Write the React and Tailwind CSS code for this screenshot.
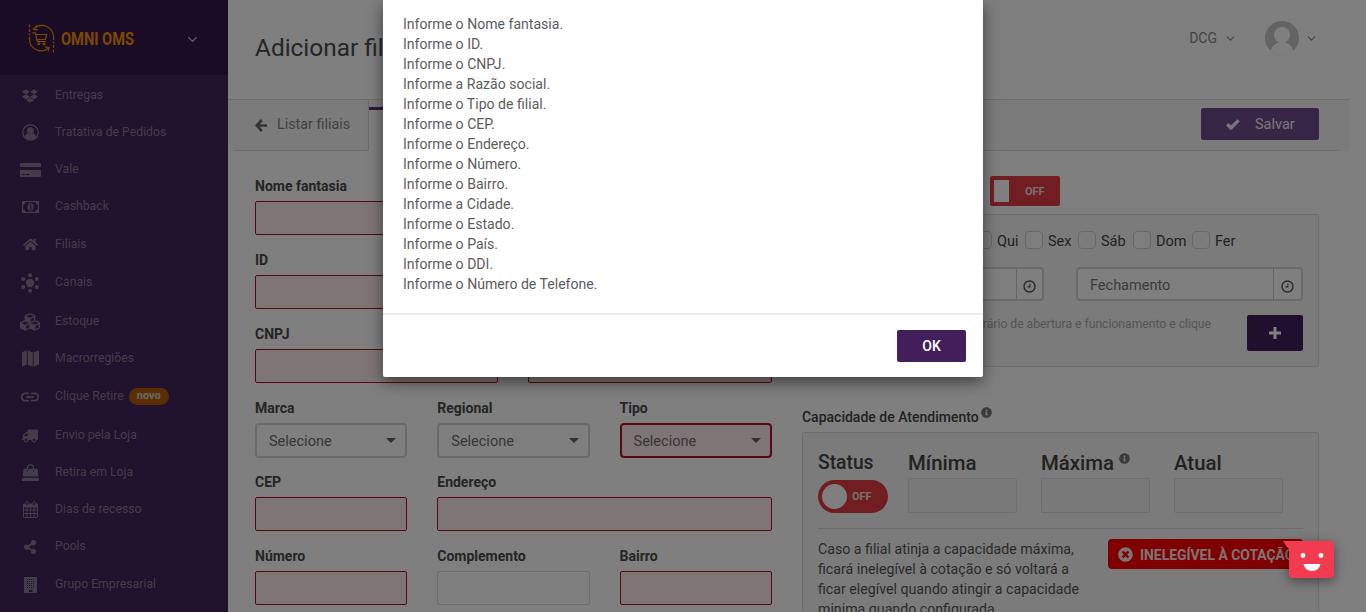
import React from "react";
import { FaDropbox, FaHome, FaCubes, FaTruck, FaShareAlt, FaInfoCircle, FaTimesCircle } from "react-icons/fa";
import { MdLink } from "react-icons/md";
import { FiChevronDown } from "react-icons/fi";

const UserIcon = () => (
  <svg width="17" height="17" viewBox="0 0 17 17" fill="currentColor">
    <circle cx="8.5" cy="8.5" r="7.7" fill="none" stroke="currentColor" strokeWidth="1.3" />
    <circle cx="8.5" cy="6.6" r="3.4" />
    <path d="M3 13.2c.4-2.6 1.7-3.8 3.2-4 1.400 1 3.200 1 4.600 0 1.500.2 2.800 1.400 3.200 4-1.300 1.600-3.300 2.500-5.500 2.500S4.300 14.800 3 13.200z" />
  </svg>
);
const CardIcon = () => (
  <svg width="21" height="14" viewBox="0 0 21 14" fill="currentColor">
    <path d="M1.200 0h18.600q1.200 0 1.200 1.200V4H0V1.200Q0 0 1.200 0z" />
    <path fillRule="evenodd" d="M0 7h21v5.800q0 1.200-1.200 1.200H1.200Q0 14 0 12.800zM2 11v1h3v-1zM6 11v1h3.500v-1z" />
  </svg>
);
const MoneyIcon = () => (
  <svg width="17" height="12" viewBox="0 0 17 12" fill="currentColor">
    <path fillRule="evenodd" d="M0 0h17v12H0zM3.400 1.200A2.300 2.300 0 0 1 1.200 3.400v5.200a2.300 2.300 0 0 1 2.200 2.200h10.200a2.300 2.300 0 0 1 2.200-2.200V3.400a2.300 2.300 0 0 1-2.200-2.200z" />
    <ellipse cx="8.500" cy="6" rx="3" ry="3.700" />
    <path d="M7.500 4.200 8.800 3.500v4.300M7.300 8.200h2.600" fill="none" stroke="#42245a" strokeWidth="1" />
  </svg>
);
const HubIcon = () => (
  <svg width="18" height="20" viewBox="0 0 18 20" fill="currentColor">
    <circle cx="9" cy="10" r="4.200" />
    <circle cx="9" cy="2.200" r="2" /><circle cx="9" cy="17.800" r="2" />
    <circle cx="2.200" cy="6" r="2" /><circle cx="15.800" cy="6" r="2" />
    <circle cx="2.200" cy="14" r="2" /><circle cx="15.800" cy="14" r="2" />
  </svg>
);
const MapIcon = () => (
  <svg width="17" height="17" viewBox="0 0 17 17" fill="currentColor">
    <path d="M0 2.200 4.800.2v14.400L0 16.800zM5.700.2l5 2v14.600l-5-2.200zM11.600 2.200 17 .2v14.400l-5.400 2.200z" />
  </svg>
);
const BagIcon = () => (
  <svg width="17" height="17" viewBox="0 0 17 17" fill="currentColor">
    <path d="M1.600 4.700h13.800l1 7.800H.6zM.3 13.700h16.400L17 17H0z" />
    <path d="M5.400 7V4a3.100 3.100 0 0 1 6.200 0v3" fill="none" stroke="currentColor" strokeWidth="1.200" />
    <circle cx="5.400" cy="6.700" r=".7" fill="#42245a" /><circle cx="11.600" cy="6.700" r=".7" fill="#42245a" />
  </svg>
);
const CalendarIcon = () => (
  <svg width="15" height="17" viewBox="0 0 15 17" fill="currentColor">
    <path fillRule="evenodd" d="M1 2.500h13q1 0 1 1V16q0 1-1 1H1q-1 0-1-1V3.500q0-1 1-1zM1 6.600v2h2.500v-2zM4.400 6.600v2h2.700v-2zM8 6.600v2h2.700v-2zM11.600 6.600v2H14v-2zM1 9.500V12h2.500V9.500zM4.400 9.500V12h2.700V9.500zM8 9.500V12h2.700V9.500zM11.600 9.500V12H14V9.500zM1 12.900v3h2.500v-3zM4.400 12.900v3h2.700v-3zM8 12.900v3h2.700v-3zM11.600 12.900v3H14v-3z" />
    <rect x="2.800" y=".5" width="2.400" height="4" rx="1.200" fill="#42245a" stroke="currentColor" strokeWidth="1" />
    <rect x="9.800" y=".5" width="2.400" height="4" rx="1.200" fill="#42245a" stroke="currentColor" strokeWidth="1" />
  </svg>
);
const BuildingIcon = () => (
  <svg width="13" height="16" viewBox="0 0 13 16" fill="currentColor">
    <rect width="13" height="16" rx=".5" />
    <g stroke="#42245a" strokeWidth="1" strokeDasharray="1 1">
      <path d="M3 2.500h8M3 4.500h8M3 6.500h8M3 8.500h8M3 10.500h8" />
    </g>
    <path d="M5 12.800h3.500V15H5z" fill="#42245a" />
  </svg>
);
const ArrowIcon = () => (
  <svg width="12" height="13" viewBox="0 0 12 13" className="mr-[10px]" fill="none" stroke="#666" strokeWidth="2.600">
    <path d="M6.800 1 1.700 6.500l5.100 5.500M2 6.500h10" />
  </svg>
);
const CheckIcon = () => (
  <svg width="14" height="11" viewBox="0 0 14 11" className="mr-[15px]" fill="none" stroke="currentColor" strokeWidth="3.400">
    <path d="M1.200 5.200 5 8.800l7.600-7.400" />
  </svg>
);

const menu = [
  ["Entregas", <FaDropbox size={16} />, "h-[37px]"],
  ["Tratativa de Pedidos", <UserIcon />, "h-[37px]"],
  ["Vale", <CardIcon />, "h-[37px]"],
  ["Cashback", <MoneyIcon />, "h-[38px]"],
  ["Filiais", <FaHome size={15} />, "h-[38px]"],
  ["Canais", <HubIcon />, "h-[39px]"],
  ["Estoque", <FaCubes size={20} />, "h-[37px]"],
  ["Macrorregiões", <MapIcon />, "h-[38px]"],
  ["Clique Retire", <MdLink size={22} />, "h-[39px]"],
  ["Envio pela Loja", <FaTruck size={16} className="-scale-x-100" />, "h-[37px]"],
  ["Retira em Loja", <BagIcon />, "h-[37px]"],
  ["Dias de recesso", <CalendarIcon />, "h-[37px]"],
  ["Pools", <FaShareAlt size={14} />, "h-[38px]"],
  ["Grupo Empresarial", <BuildingIcon />, "h-[37px]"],
];

function Sidebar() {
  return (
    <aside className="w-[228px] shrink-0 overflow-hidden bg-[#42245a]">
      <div className="flex h-[75px] items-center bg-[#36184a] pl-7 pt-0.5">
        <svg width="27" height="29" viewBox="0 0 27 29" fill="none" stroke="#f29400" strokeWidth="1.200">
          <path d="M1.500.5v11" strokeDasharray="3 1.500" />
          <path d="M1.500 13v2.500A11.500 11.500 0 0 0 20.500 24M17 22.800l4 .6-1 4" />
          <path d="M25.500 28.500v-11" strokeDasharray="3 1.500" />
          <path d="M25.500 16v-2.500A11.500 11.500 0 0 0 6 4.800M9 1.500 5.500 5.200l4.300.6" />
          <path d="M4.500 8.800h2.700l2.300 8.700h8M7.500 10.500h11.200l-1.400 5H9" />
          <circle cx="10.800" cy="19.800" r=".9" /><circle cx="16" cy="19.800" r=".9" />
        </svg>
        <svg width="76" height="24" viewBox="0 0 76 24" className="ml-1.5">
          <text x="0" y="18" textLength="73" lengthAdjust="spacingAndGlyphs" fill="#f29400" fontFamily="Roboto, sans-serif" fontWeight="700" fontSize="18">OMNI OMS</text>
        </svg>
        <FiChevronDown size={15} strokeWidth={2.200} className="ml-[48px] mt-0.5 text-[#c4bcca]" />
      </div>
      <nav className="pt-0.5 text-[#8a7895]">
        {menu.map(([label, icon, h]) => (
          <div key={label} className={h}>
            <div className="flex h-[37px] items-center">
              <span className="ml-[18px] flex w-6 shrink-0 justify-center">{icon}</span>
              <span className="ml-[13px] whitespace-nowrap text-[12.250px]">{label}</span>
              {label === "Clique Retire" && (
                <span className="ml-[5px] flex h-[17px] w-10 items-center justify-center rounded-full bg-[#b45f09] text-[11px] font-bold text-[#d8d0c8]">novo</span>
              )}
            </div>
          </div>
        ))}
      </nav>
    </aside>
  );
}

function Field({ label, tone = "error", span, select }) {
  const box = tone === "error" ? "border-[#b01028] bg-[#ffeaec]" : "border-[#dcdcdc] bg-white";
  return (
    <div className={span}>
      <div className="mb-[5px] h-5 whitespace-nowrap text-sm leading-5 font-bold text-[#4a4a4a]">{label}</div>
      {select ? (
        <div className={"flex h-[35px] items-center justify-between rounded-[4px] border-2 pr-[9px] pl-3 text-[14.500px] text-[#6e6e6e] " + (tone === "error" ? "border-[#b01028] bg-[#ffeaec]" : "border-[#d4d4d4] bg-white")}>
          <span className="pt-0.5">Selecione</span>
          <span className="border-x-[5px] border-t-[5px] border-x-transparent border-t-[#606060]" />
        </div>
      ) : (
        <div className={"h-[34px] rounded-[2px] border " + box} />
      )}
    </div>
  );
}

const Clock = () => (
  <svg width="13" height="13" viewBox="0 0 13 13" fill="none" stroke="#555" strokeWidth="1.400">
    <circle cx="6.500" cy="6.500" r="5.500" /><path d="M6.900 3.500v3.400H4.500" strokeWidth="1.100" />
  </svg>
);

function TimeInput({ label, addon }) {
  return (
    <div className="flex h-[34px] w-[227px] rounded-[4px] border-2 border-[#d4d4d4] bg-white">
      <div className="flex flex-1 items-center pt-[3px] pl-3 text-[14.500px] text-[#777]">{label}</div>
      <div className={"flex items-center justify-center border-l border-[#c8c8c8] pt-1 " + addon}><Clock /></div>
    </div>
  );
}

function Capacity({ label, info }) {
  return (
    <div className="w-[109px]">
      <div className="flex h-[30px] items-center text-[20.400px] font-medium text-[#444]">
        {label}{info && <FaInfoCircle size={11} className="mb-2.5 ml-[5px] text-[#777]" />}
      </div>
      <div className="h-[35px] rounded-[2px] border border-[#dedede] bg-[#f2f2f2]" />
    </div>
  );
}

const days = [["Seg", "w-[49px]"], ["Ter", "w-[49px]"], ["Qua", "w-[52px]"], ["Qui", "w-[51px]"], ["Sex", "w-[53px]"], ["Sáb", "w-[55px]"], ["Dom", "w-[59px]"], ["Fer", "w-[50px]"]];

const messages = ["o Nome fantasia", "o ID", "o CNPJ", "a Razão social", "o Tipo de filial", "o CEP", "o Endereço", "o Número", "o Bairro", "a Cidade", "o Estado", "o País", "o DDI", "o Número de Telefone"];

export default function App() {
  return (
    <div className="relative flex h-[612px] w-[1366px] overflow-hidden bg-white font-['Roboto',sans-serif]">
      <Sidebar />
      <main className="min-w-0 flex-1 overflow-hidden">
        <header className="mr-[17px] flex h-[100px] justify-between border-b border-[#d8d8d8] pl-[27px]">
          <h1 className="mt-[30px] text-[24.400px] leading-9 text-[#4c4c4c]">Adicionar filial</h1>
          <div className="mr-[31px] flex h-[76px] items-center text-[#888]">
            <span className="pt-px text-[14px]">DCG</span>
            <FiChevronDown size={13} className="ml-[7px] mt-px" />
            <svg width="34" height="34" viewBox="0 0 34 34" className="ml-[28px]">
              <defs><clipPath id="face"><circle cx="17" cy="17" r="17" /></clipPath></defs>
              <g clipPath="url(#face)">
                <rect width="34" height="34" fill="#c6c6c6" />
                <circle cx="17" cy="14" r="8" fill="#fff" />
                <path d="M4 34q3-13 13-13t13 13z" fill="#fff" />
              </g>
            </svg>
            <FiChevronDown size={13} className="ml-[6px] mt-px" />
          </div>
        </header>
        <div className="mr-[17px] flex h-[51px] justify-between bg-[#f7f7f7]">
          <div className="flex">
            <div className="ml-[7px] flex w-[134px] items-center border-r border-b border-[#d8d8d8] pl-5 text-[14.350px] text-[#848484]">
              <ArrowIcon />Listar filiais
            </div>
            <div className="mt-[7px] w-[140px] border-t-[3px] border-[#6d2a8c] bg-white" />
          </div>
          <div className="mr-[10px] flex flex-1 justify-end border-b border-[#d8d8d8] pt-2 pr-5">
            <div className="flex h-8 w-[118px] items-center rounded-[2px] bg-[#714d8d] pt-px pl-[25px] text-[14.500px] text-[#f3edf6]">
              <CheckIcon />Salvar
            </div>
          </div>
        </div>
        <div className="flex gap-[30px] pt-[25px] pl-[27px]">
          <div className="mr-[0.2px] grid w-[516.8px] auto-rows-[74px] grid-cols-6 content-start gap-x-[30px]">
            <Field label="Nome fantasia" span="col-span-6" />
            <Field label="ID" span="col-span-6" />
            <Field label="CNPJ" span="col-span-3" />
            <Field label="Razão social" span="col-span-3" />
            <Field label="Marca" span="col-span-2" tone="plain" select />
            <Field label="Regional" span="col-span-2" tone="plain" select />
            <Field label="Tipo" span="col-span-2" select />
            <Field label="CEP" span="col-span-2" />
            <Field label="Endereço" span="col-span-4" />
            <Field label="Número" span="col-span-2" />
            <Field label="Complemento" span="col-span-2" tone="plain" />
            <Field label="Bairro" span="col-span-2" />
          </div>
          <div className="w-[517px]">
            <div className="flex h-[30px] items-center">
              <span className="w-[188px] text-sm font-bold text-[#4a4a4a]">Horário</span>
              <div className="flex h-[30px] w-[70px] items-center rounded-[2px] bg-[#e03c44] pl-1 text-[11px] font-bold text-[#f8dfe0]">
                <span className="mr-[16px] h-[22px] w-[15px] bg-white" /><span className="pt-0.5">OFF</span>
              </div>
            </div>
            <section className="mt-2 h-[153px] rounded-[2px] border border-[#dcdcdc] bg-[#f7f7f7]">
              <div className="flex pt-4 pl-[21px]">
                {days.map(([d, w]) => (
                  <label key={d} className={"flex h-[18px] shrink-0 items-center text-[14.500px] text-[#444] " + w}>
                    <span className="mr-[5px] h-[18px] w-[18px] shrink-0 rounded-[4px] border border-[#cfcfcf] bg-[#fafafa]" /><span className="pt-[3px]">{d}</span>
                  </label>
                ))}
              </div>
              <div className="mt-[18px] flex justify-end gap-8 pr-[15px]">
                <TimeInput label="Abertura" addon="w-[26px]" />
                <TimeInput label="Fechamento" addon="w-7" />
              </div>
              <div className="mt-[14px] flex justify-end pr-[15px]">
                <span className="mr-[36px] whitespace-nowrap text-[12.150px] leading-[18px] text-[#aaa]">Defina o horário de abertura e funcionamento e clique</span>
                <div className="flex h-9 w-14 items-center justify-center rounded-[2px] bg-[#43205a] text-white">
                  <svg width="12" height="12" viewBox="0 0 12 12" className="mb-px" stroke="currentColor" strokeWidth="3"><path d="M0 6h12M6 0v12" /></svg>
                </div>
              </div>
            </section>
            <div className="mt-10 flex h-5 items-center text-sm font-medium text-[#444]">Capacidade de Atendimento<FaInfoCircle size={11} className="mb-2.5 ml-[2px] text-[#777]" /></div>
            <section className="mt-[5px] h-[240px] rounded-[2px] border border-[#dcdcdc] bg-[#f7f7f7] px-[15px] pt-[15px]">
              <div className="flex">
                <div className="w-[90px]">
                  <div className="h-8 text-[19.300px] leading-[29px] font-medium text-[#444]">Status</div>
                  <div className="flex h-[33px] w-[70px] items-center rounded-full bg-[#e03c44] pl-1 text-[11px] font-bold text-[#f8dfe0]">
                    <span className="mr-[5px] h-[25px] w-[25px] rounded-full bg-white" /><span className="pt-0.5">OFF</span>
                  </div>
                </div>
                <div className="flex gap-6"><Capacity label="Mínima" /><Capacity label="Máxima" info /><Capacity label="Atual" /></div>
              </div>
              <div className="mt-[15px] flex justify-between border-t border-[#d8d8d8] pt-[10px]">
                <p className="w-[270px] text-[14.180px] leading-5 text-[#555]">Caso a filial atinja a capacidade máxima,<br />ficará inelegível à cotação e só voltará a<br />ficar elegível quando atingir a capacidade<br />minima quando configurada</p>
                <div className="flex h-[30px] w-[195px] items-center overflow-hidden rounded-[4px] bg-[#ff0000] pl-[10px] text-[13.900px] font-bold whitespace-nowrap text-[#ffe4e4]">
                  <FaTimesCircle size={15} className="mr-[7px] shrink-0" /><span className="pt-0.5">INELEGÍVEL À COTAÇÃO</span>
                </div>
              </div>
            </section>
          </div>
        </div>
      </main>

      <div className="absolute inset-0 flex items-start bg-black/50 pl-[383px]">
        <div role="dialog" className="h-[377px] w-[600px] rounded-b-[2px] bg-white shadow-[0_5px_15px_rgba(0,0,0,0.5)]">
          <div className="h-[315px] border-b-2 border-[#ececec] px-5 pt-[14px] text-[14.080px] leading-5 text-[#5c5c5c]">
            {messages.map((m) => <p key={m}>Informe {m}.</p>)}
          </div>
          <div className="flex justify-end pt-[15px] pr-[17px]">
            <button className="h-8 w-[69px] rounded-[2px] bg-[#421f5b] text-sm font-medium text-white">OK</button>
          </div>
        </div>
      </div>

      <div className="absolute top-[541px] left-[1283px] drop-shadow-[0_3px_6px_rgba(0,0,0,0.45)]">
        <svg width="51" height="38" viewBox="0 0 51 38">
          <path d="M0 0h47q4 0 4 4v29q0 4-4 4H10q-4 0-4-4V8Q3 5 0 0z" fill="#f33b50" />
          <circle cx="20" cy="14.500" r="2.400" fill="#fff" /><circle cx="38" cy="14.500" r="2.400" fill="#fff" />
          <path d="M20.500 23h17q-1.500 7-8.500 7t-8.500-7z" fill="#fff" />
        </svg>
      </div>
    </div>
  );
}
